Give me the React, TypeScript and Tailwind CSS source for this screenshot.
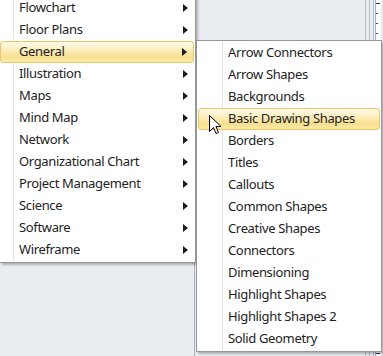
import React from 'react';

const mainItems = [
  'Flowchart',
  'Floor Plans',
  'General',
  'Illustration',
  'Maps',
  'Mind Map',
  'Network',
  'Organizational Chart',
  'Project Management',
  'Science',
  'Software',
  'Wireframe',
];

const subItems = [
  'Arrow Connectors',
  'Arrow Shapes',
  'Backgrounds',
  'Basic Drawing Shapes',
  'Borders',
  'Titles',
  'Callouts',
  'Common Shapes',
  'Creative Shapes',
  'Connectors',
  'Dimensioning',
  'Highlight Shapes',
  'Highlight Shapes 2',
  'Solid Geometry',
];

const hot =
  'border border-[#e9c86a] rounded-[3px] bg-[linear-gradient(to_bottom,#fefaea_0%,#fbeebc_40%,#f7df8e_75%,#fbeaa8_100%)]';

const Arrow: React.FC = () => (
  <svg width="5" height="8" viewBox="0 0 5 8" className="shrink-0">
    <path d="M0 0 L5 4 L0 8 Z" fill="#1a1a1a" />
  </svg>
);

const Cursor: React.FC = () => (
  <svg width="13" height="21" viewBox="0 0 13 21" className="absolute left-[209px] top-[115px]">
    <path
      d="M0.5 0.5 L0.5 16.5 L4.5 12.5 L7 18.5 L9.5 17.5 L7 11.5 L12 11.5 Z"
      fill="#ffffff"
      stroke="#000000"
      strokeWidth="1"
    />
  </svg>
);

const Ruler: React.FC = () => (
  <div className="w-[5px] h-full bg-white flex flex-col pt-[3px]">
    {Array.from({ length: 36 }).map((_, i) => (
      <div key={i} className="h-[10px] shrink-0">
        <div className={i % 5 === 0 ? 'w-[4px] h-px bg-[#333]' : 'w-[2px] h-px bg-[#555]'} />
      </div>
    ))}
  </div>
);

const App: React.FC = () => {
  return (
    <div className="relative w-[383px] h-[356px] overflow-hidden bg-[#e9ecf1] font-['Noto_Sans',sans-serif] text-[13px] tracking-[-0.35px] text-[#222]">
      {/* background: canvas panel edges and ruler */}
      <div className="flex h-full">
        <div className="w-[195px] border-r border-[#a9adb5]" />
        <div className="w-[170px]" />
        <div className="w-[5px] border-x border-[#b9bdc4]" />
        <div className="w-[4px] border-r border-[#b9bdc4]" />
        <div className="w-[2px] border-r border-[#9fb4d6]" />
        <Ruler />
      </div>

      {/* main menu */}
      <div className="absolute left-0 top-[-3px] w-[196px] bg-white border-r border-b border-[#979797] shadow-[2px_2px_2px_rgba(0,0,0,0.25)]">
        <div className="relative pb-px">
          <div className="absolute left-[13px] top-0 bottom-0 w-px bg-[#e2e3e3]" />
          {mainItems.map((t) => (
            <div
              key={t}
              className={`relative h-[22px] flex items-center justify-between pl-[18px] pr-[6px] pb-px ${
                t === 'General' ? hot + ' mr-px' : 'border border-transparent'
              }`}
            >
              <span className="leading-none">{t}</span>
              <Arrow />
            </div>
          ))}
        </div>
      </div>

      {/* submenu */}
      <div className="absolute left-[196px] top-[40px] w-[186px] bg-white border border-[#979797] p-px shadow-[2px_2px_2px_rgba(0,0,0,0.25)]">
        <div className="relative">
          <div className="absolute left-[24px] top-0 bottom-0 w-px bg-[#e2e3e3]" />
          {subItems.map((t) => (
            <div
              key={t}
              className={`relative h-[22px] flex items-center pl-[29px] pb-px ${
                t === 'Basic Drawing Shapes' ? hot : 'border border-transparent'
              }`}
            >
              <span className="leading-none">{t}</span>
            </div>
          ))}
        </div>
      </div>

      <Cursor />
    </div>
  );
};

export default App;
